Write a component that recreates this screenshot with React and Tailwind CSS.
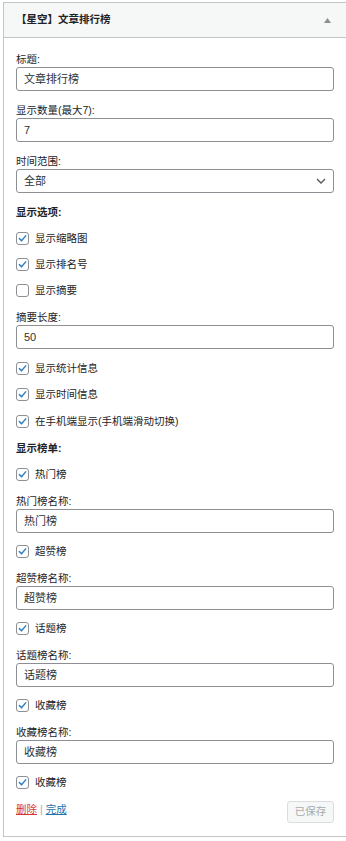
import React from "react";

const Label = ({ children, className = "", bold = false }) => (
  <div
    className={`h-[16px] leading-[16px] text-[10.5px] text-[#1d2327] ${
      bold ? "font-bold" : ""
    } ${className}`}
  >
    {children}
  </div>
);

const Field = ({ value }) => (
  <div className="h-[24px] border border-[#8c8f94] rounded-[3px] px-[7px] flex items-center text-[11px] text-[#2c3338] bg-white">
    {value}
  </div>
);

const Check = ({ checked = true, children, className = "" }) => (
  <div className={`flex items-center h-[16px] ${className}`}>
    <span className="w-[13px] h-[13px] border border-[#8c8f94] rounded-[3px] bg-white flex items-center justify-center shrink-0">
      {checked && (
        <svg width="11" height="11" viewBox="0 0 16 16">
          <path
            d="M3.5 8.2 L6.6 11.4 L12.6 4.2"
            fill="none"
            stroke="#3582c4"
            strokeWidth="2.2"
            strokeLinecap="round"
            strokeLinejoin="round"
          />
        </svg>
      )}
    </span>
    <span className="ml-[6px] text-[10.5px] text-[#1d2327] leading-[16px]">
      {children}
    </span>
  </div>
);

export default function App() {
  return (
    <div className="w-[346px] h-[841px] overflow-hidden bg-white font-[Liberation_Sans,Noto_Sans_CJK_SC,sans-serif]">
      <div className="mt-[2px] ml-[3px] w-[344px] border border-[#c3c4c7] bg-white">
        {/* header */}
        <div className="h-[35px] bg-[#f6f7f7] border-b border-[#c3c4c7] flex items-center justify-between pl-[12px] pr-[14px]">
          <span className="text-[10.5px] font-bold text-[#1d2327]">【星空】文章排行榜</span>
          <svg width="7" height="5" viewBox="0 0 7 5" className="mr-[1px]">
            <path d="M0 5 L3.5 0 L7 5 Z" fill="#8c8f94" />
          </svg>
        </div>

        {/* body */}
        <div className="px-[12px] pt-[13px] pb-[13px]">
          <Label>标题:</Label>
          <Field value="文章排行榜" />

          <Label className="mt-[11px]">显示数量(最大7):</Label>
          <Field value="7" />

          <Label className="mt-[11px]">时间范围:</Label>
          <div className="h-[24px] border border-[#8c8f94] rounded-[3px] pl-[7px] pr-[7px] flex items-center justify-between text-[11px] text-[#2c3338]">
            <span>全部</span>
            <svg width="10" height="6" viewBox="0 0 10 6">
              <path d="M1 1 L5 5 L9 1" fill="none" stroke="#50575e" strokeWidth="1.3" />
            </svg>
          </div>

          <Label bold className="mt-[11px]">显示选项:</Label>
          <Check className="mt-[10px]">显示缩略图</Check>
          <Check className="mt-[10px]">显示排名号</Check>
          <Check checked={false} className="mt-[10px]">显示摘要</Check>

          <Label className="mt-[11px]">摘要长度:</Label>
          <Field value="50" />

          <Check className="mt-[11px]">显示统计信息</Check>
          <Check className="mt-[10px]">显示时间信息</Check>
          <Check className="mt-[11px]">在手机端显示(手机端滑动切换)</Check>

          <Label bold className="mt-[11px]">显示榜单:</Label>
          <Check className="mt-[10px]">热门榜</Check>
          <Label className="mt-[11px]">热门榜名称:</Label>
          <Field value="热门榜" />

          <Check className="mt-[10px]">超赞榜</Check>
          <Label className="mt-[11px]">超赞榜名称:</Label>
          <Field value="超赞榜" />

          <Check className="mt-[10px]">话题榜</Check>
          <Label className="mt-[11px]">话题榜名称:</Label>
          <Field value="话题榜" />

          <Check className="mt-[10px]">收藏榜</Check>
          <Label className="mt-[11px]">收藏榜名称:</Label>
          <Field value="收藏榜" />

          <Check className="mt-[10px]">收藏榜</Check>

          {/* footer */}
          <div className="mt-[11px] flex items-start justify-between">
            <div className="text-[10.5px] leading-[16px] text-[#a7aaad]">
              <a className="text-[#d63638] underline">删除</a>
              <span className="mx-[3px]">|</span>
              <a className="text-[#2271b1] underline">完成</a>
            </div>
            <button
              disabled
              className="w-[47px] h-[22px] border border-[#dcdcde] bg-[#f6f7f7] rounded-[3px] text-[10.5px] text-[#a7aaad]"
            >
              已保存
            </button>
          </div>
        </div>
      </div>
    </div>
  );
}
